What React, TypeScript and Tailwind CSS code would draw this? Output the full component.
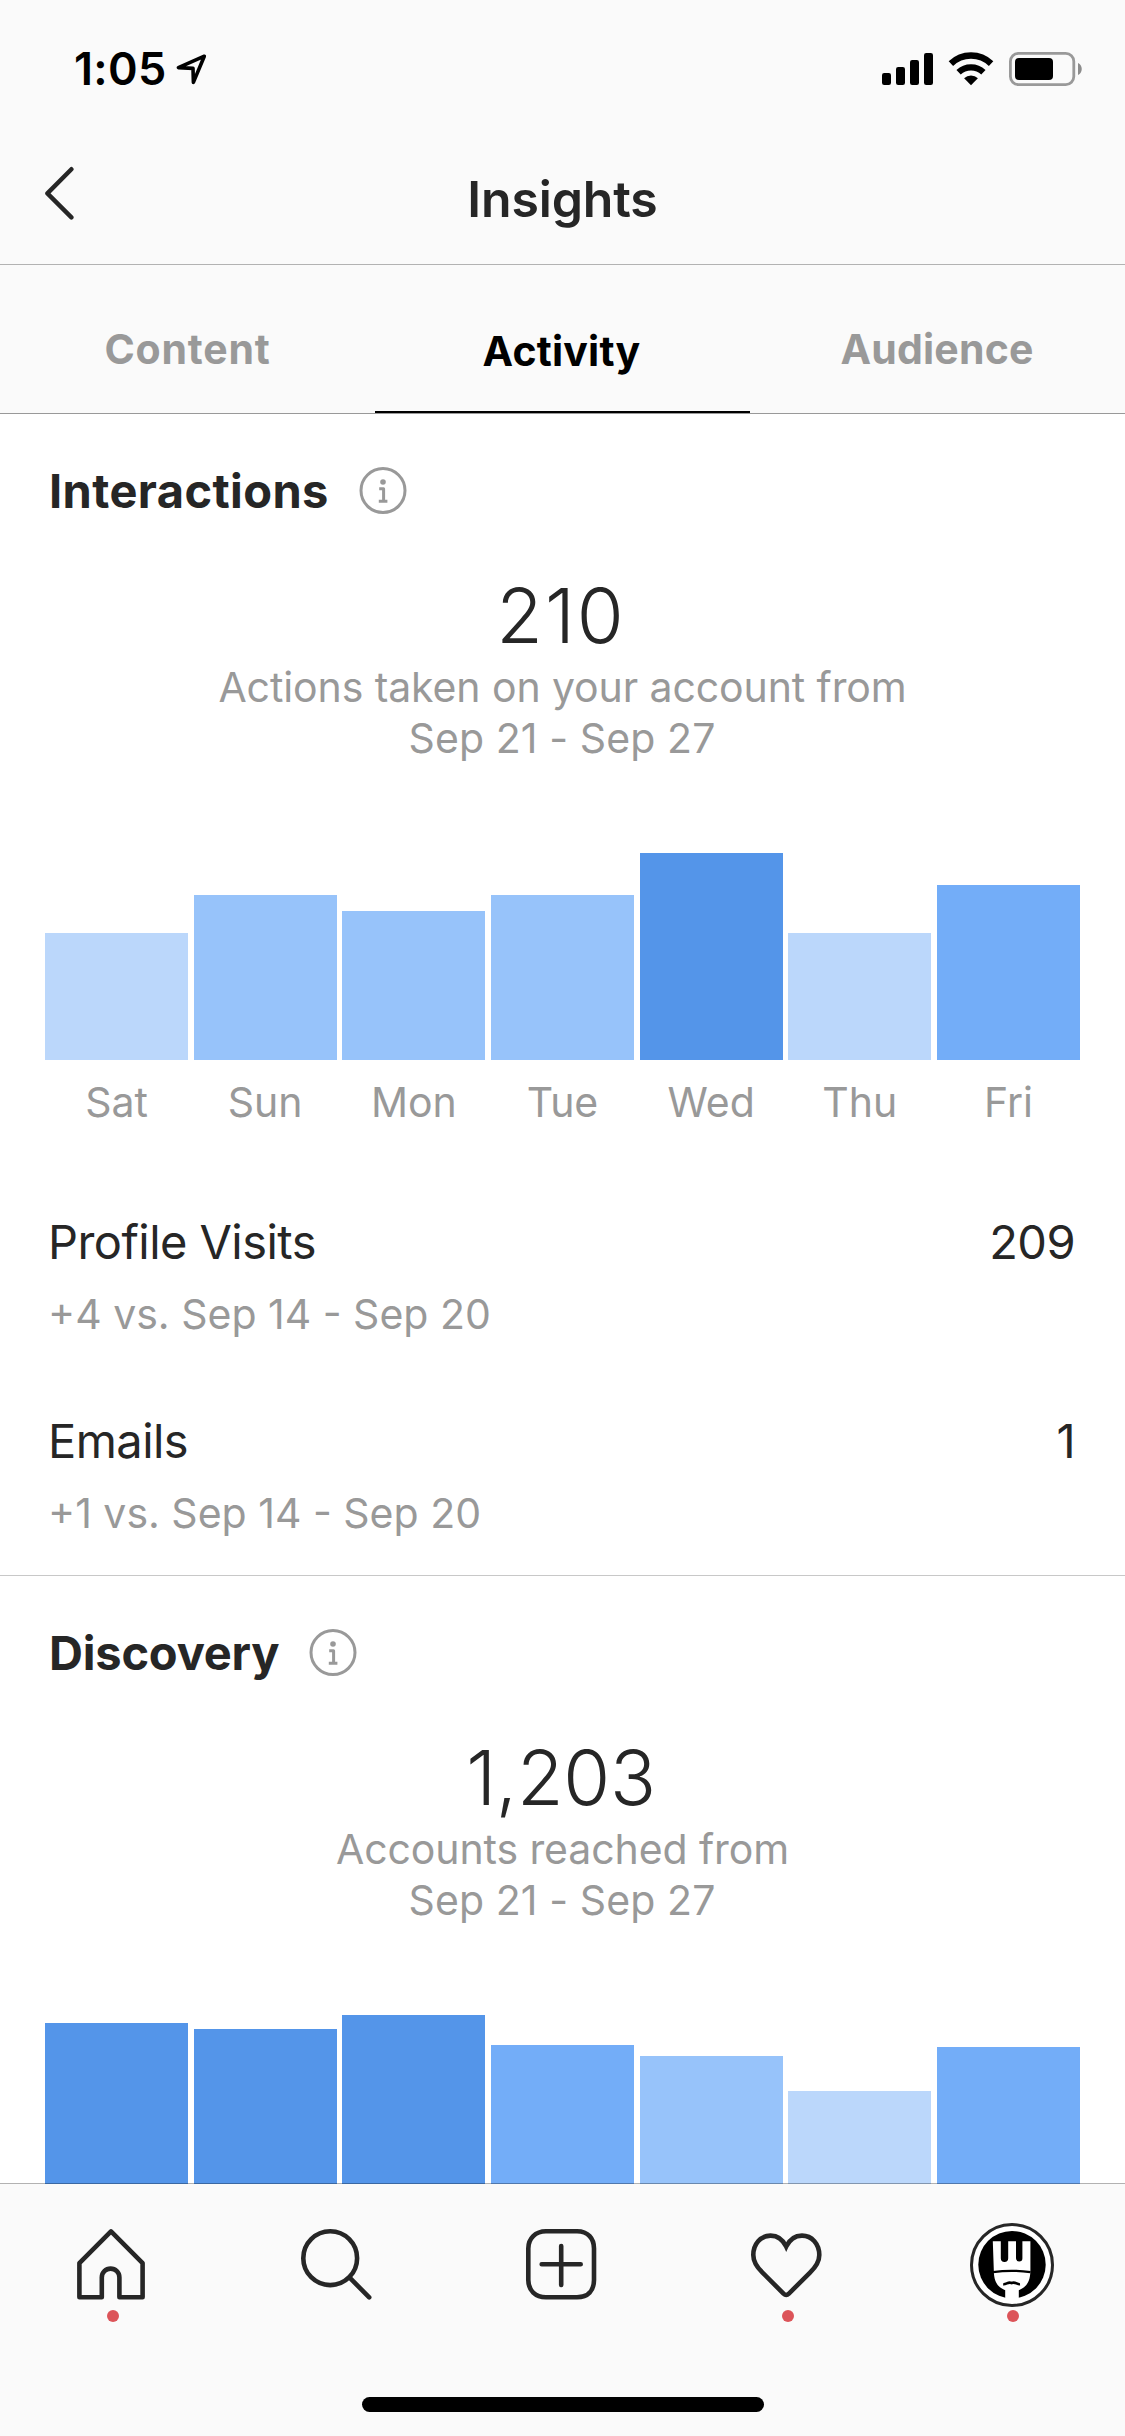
import React from 'react';

interface DayValue {
  day: string;
  value: number;
  color: string;
}

interface Metric {
  label: string;
  value: string;
  change: string;
}

interface SectionProps {
  title: string;
  titleClass: string;
  total: string;
  totalClass: string;
  caption: string;
  days: DayValue[];
  showDays?: boolean;
  metrics?: Metric[];
}

const CHART_HEIGHT = 207;

const interactions: DayValue[] = [
  { day: 'Sat', value: 24, color: 'bg-[#bbd7fb]' },
  { day: 'Sun', value: 31, color: 'bg-[#97c3fa]' },
  { day: 'Mon', value: 28, color: 'bg-[#97c3fa]' },
  { day: 'Tue', value: 31, color: 'bg-[#97c3fa]' },
  { day: 'Wed', value: 39, color: 'bg-[#5495e9]' },
  { day: 'Thu', value: 24, color: 'bg-[#bbd7fb]' },
  { day: 'Fri', value: 33, color: 'bg-[#73adf8]' },
];

const discovery: DayValue[] = [
  { day: 'Sat', value: 191, color: 'bg-[#5495e9]' },
  { day: 'Sun', value: 186, color: 'bg-[#5495e9]' },
  { day: 'Mon', value: 199, color: 'bg-[#5495e9]' },
  { day: 'Tue', value: 170, color: 'bg-[#73adf8]' },
  { day: 'Wed', value: 160, color: 'bg-[#97c3fa]' },
  { day: 'Thu', value: 126, color: 'bg-[#bbd7fb]' },
  { day: 'Fri', value: 168, color: 'bg-[#73adf8]' },
];

const metrics: Metric[] = [
  { label: 'Profile Visits', value: '209', change: '+4 vs. Sep 14 - Sep 20' },
  { label: 'Emails', value: '1', change: '+1 vs. Sep 14 - Sep 20' },
];

const StatusBar: React.FC = () => (
  <div className="flex h-[132px] items-start justify-between pt-[46px] pr-[42px] pl-[74px]">
    <div className="flex h-[46px] items-center gap-[9px]">
      <span className="text-[45px] leading-[46px] font-semibold tracking-[0.3px] text-black">1:05</span>
      <svg width="31" height="31" viewBox="0 0 31 31" fill="none" stroke="#000" strokeWidth="3.6" strokeLinejoin="round">
        <path d="M28.3 2.2 2.4 13.6 17 14.4 17.4 28.4Z" />
      </svg>
    </div>
    <div className="flex h-[46px] items-center">
      <svg width="52" height="34" viewBox="0 0 52 34" fill="#000">
        <rect x="0" y="21" width="9" height="12" rx="2.2" />
        <rect x="14" y="15" width="9" height="18" rx="2.2" />
        <rect x="28" y="8" width="9" height="25" rx="2.2" />
        <rect x="42" y="1" width="9" height="32" rx="2.2" />
      </svg>
      <svg className="ml-[14px]" width="46" height="34" viewBox="0 0 46 34">
        <path d="M2.9 11.6a29 29 0 0 1 40.2 0" fill="none" stroke="#000" strokeWidth="6.4" />
        <path d="M10.6 20.3a18 18 0 0 1 24.8 0" fill="none" stroke="#000" strokeWidth="6.2" />
        <path d="M16.1 26.3a10.2 10.2 0 0 1 13.8 0L23 33.2Z" fill="#000" />
      </svg>
      <svg className="ml-[15px]" width="74" height="34" viewBox="0 0 74 34">
        <rect x="1.4" y="1.4" width="63.4" height="31.2" rx="8" fill="none" stroke="#999" strokeWidth="2.8" />
        <rect x="6" y="6" width="38" height="22" rx="4" fill="#000" />
        <path d="M69 11c5 2 5 10 0 12Z" fill="#8c8c8c" />
      </svg>
    </div>
  </div>
);

const Header: React.FC = () => (
  <div className="grid h-[133px] grid-cols-3 items-center border-b border-[#b2b2b2] text-[#262626]">
    <svg className="mb-[10px] ml-[45px]" width="30" height="54" viewBox="0 0 30 54" fill="none" stroke="currentColor" strokeWidth="4.4" strokeLinecap="round" strokeLinejoin="round">
      <path d="M26.4 3.2 2.4 27.4 26.4 51.4" />
    </svg>
    <h1 className="pt-[2px] text-center text-[50px] leading-[60px] font-semibold tracking-[-0.15px]">Insights</h1>
  </div>
);

const Tabs: React.FC = () => (
  <div className="grid h-[149px] grid-cols-3 border-b border-[#999] text-center text-[41px] leading-[48px] font-bold tracking-[0.2px] text-[#999]">
    <div className="pt-[60px] tracking-[0.8px]">Content</div>
    <div className="border-b-2 border-black pt-[62px] pr-[2px] text-black">Activity</div>
    <div className="pt-[60px] pr-px">Audience</div>
  </div>
);

const InfoIcon: React.FC = () => (
  <svg width="48" height="48" viewBox="0 0 48 48" fill="none" stroke="#999" strokeWidth="3">
    <circle cx="24" cy="23.6" r="22" />
    <circle cx="24" cy="15" r="2.8" fill="#999" stroke="none" />
    <path d="M20.2 21.8H24.6V34.2M19.8 34.2H28.4" strokeWidth="3" strokeLinejoin="round" />
  </svg>
);

const BarChart: React.FC<{ days: DayValue[]; showDays: boolean }> = ({ days, showDays }) => {
  const max = Math.max(...days.map(d => d.value));

  return (
    <div className="px-[45px] pt-[89px]">
      <div className="grid h-[207px] grid-cols-7 items-end gap-x-[5.667px]">
        {days.map(d => (
          <div key={d.day} className={d.color} style={{ height: (d.value / max) * CHART_HEIGHT }} />
        ))}
      </div>
      {showDays && (
        <div className="mt-[17px] grid grid-cols-7 gap-x-[5.667px] text-center text-[41px] leading-[50px] text-[#999]">
          {days.map(d => (
            <span key={d.day}>{d.day}</span>
          ))}
        </div>
      )}
    </div>
  );
};

const Section: React.FC<SectionProps> = ({ title, titleClass, total, totalClass, caption, days, showDays = false, metrics = [] }) => (
  <section className="border-b border-[#c8c8c8] pb-[37px]">
    <div className="flex h-[154px] items-center gap-[30px] pl-[49px]">
      <h2 className={`text-[47px] leading-[56px] font-bold text-[#262626] ${titleClass}`}>{title}</h2>
      <InfoIcon />
    </div>
    <div className="text-center">
      <p className={`pt-px pr-[3px] text-[76px] leading-[93px] font-light text-[#262626] ${totalClass}`}>{total}</p>
      <p className="text-[41px] leading-[51px] tracking-[-0.1px] text-[#999]">{caption}</p>
      <p className="pr-px text-[41px] leading-[51px] tracking-[0.1px] text-[#999]">Sep 21 - Sep 27</p>
    </div>
    <BarChart days={days} showDays={showDays} />
    {metrics.length > 0 && (
      <div className="flex flex-col gap-[72px] pt-[85px] pr-[50px] pl-[48px]">
        {metrics.map(m => (
          <div key={m.label}>
            <div className="flex justify-between text-[47px] leading-[60px] tracking-[-0.55px] text-[#262626]">
              <span>{m.label}</span>
              <span>{m.value}</span>
            </div>
            <p className="mt-[17px] text-[41px] leading-[50px] text-[#999]">{m.change}</p>
          </div>
        ))}
      </div>
    )}
  </section>
);

const HomeIcon = () => (
  <svg width="84" height="84" viewBox="0 0 84 84" fill="none" stroke="#262626" strokeWidth="4.6" strokeLinejoin="round">
    <path d="M41 8.4 72.6 40.2V74.2H49.4V54.4a8.8 8.8 0 0 0-17.6 0V74.2H9.4V40.2Z" />
  </svg>
);

const SearchIcon = () => (
  <svg width="84" height="84" viewBox="0 0 84 84" fill="none" stroke="#262626" strokeWidth="4.6" strokeLinecap="round">
    <circle cx="35.2" cy="35.2" r="26.9" />
    <path d="M55.4 55.4 74.2 74.4" />
  </svg>
);

const AddIcon = () => (
  <svg width="84" height="84" viewBox="0 0 84 84" fill="none" stroke="#262626" strokeWidth="4.6" strokeLinecap="round">
    <path d="M26 8.3H57C68 8.3 74 15.5 74 25.5V57C74 67.5 68 74.2 57 74.2H26C15.5 74.2 8.3 67.5 8.3 57V25.5C8.3 15.5 15.5 8.3 26 8.3Z" />
    <path d="M41.2 23V62M21.7 41.2H60.7" />
  </svg>
);

const HeartIcon = () => (
  <svg width="84" height="84" viewBox="0 0 84 84" fill="none" stroke="#262626" strokeWidth="4.6">
    <path d="M41.2 23.6C38 16.8 32.5 12.6 25.5 12.6 15.5 12.6 8.3 21 8.3 32 8.3 39.5 12 44.3 17.5 49.6L38.5 70.6Q41.2 73.2 43.9 70.6L65 49.6C70.5 44.3 74.3 39.5 74.3 32 74.3 21 67 12.6 57 12.6 50 12.6 44.4 16.8 41.2 23.6Z" />
  </svg>
);

// Fork with a moustache inside a ring
const Avatar = () => (
  <svg width="84" height="84" viewBox="0 0 84 84">
    <circle cx="42" cy="42" r="40.5" fill="#fff" stroke="#262626" strokeWidth="3" />
    <circle cx="42" cy="41.7" r="33.7" fill="#000" />
    <path
      fill="#fff"
      d="M22.8 18.2H30.8V35.2a3.7 3.7 0 0 0 7.4 0V18.2H46V35.2a3.2 3.2 0 0 0 6.4 0V18.2H60.4V47C60.4 58 57 64 48.8 67.2V77H35.2V67.2C27 64 23.8 58 23.8 47Z"
    />
    <path d="M23 49.2Q41.5 46.4 60.5 49.2" fill="none" stroke="#000" strokeWidth="2.2" />
    <path d="M33.2 61.2C36.5 61.6 38 58.4 41.6 60 45.3 58.4 47 61.6 50 61.2" fill="none" stroke="#000" strokeWidth="2.6" />
  </svg>
);

const navItems = [
  { name: 'home', icon: <HomeIcon />, hasDot: true },
  { name: 'search', icon: <SearchIcon />, hasDot: false },
  { name: 'add', icon: <AddIcon />, hasDot: false },
  { name: 'activity', icon: <HeartIcon />, hasDot: true },
  { name: 'profile', icon: <Avatar />, hasDot: true },
];

const BottomNav: React.FC = () => (
  <nav className="relative flex h-[252px] shrink-0 flex-col items-center bg-[#fafafa]">
    <div className="absolute inset-x-0 -top-px h-px bg-black/30" />
    <div className="grid h-[213px] w-full grid-cols-5 pt-[39px]">
      {navItems.map(item => (
        <div key={item.name} className="flex flex-col items-center gap-[3px]">
          <div className="mr-[2px]">{item.icon}</div>
          {item.hasDot && <span className="ml-px size-3 rounded-full bg-[#dc5459]" />}
        </div>
      ))}
    </div>
    <div className="h-[15px] w-[402px] rounded-full bg-black" />
  </nav>
);

const App: React.FC = () => (
  <div className="flex h-[2436px] w-[1125px] flex-col overflow-hidden bg-white font-['Inter',sans-serif]">
    <header className="shrink-0 bg-[#fafafa]">
      <StatusBar />
      <Header />
      <Tabs />
    </header>
    <main className="min-h-0 flex-1 overflow-hidden">
      <Section
        title="Interactions"
        titleClass="tracking-[0.4px]"
        total="210"
        totalClass="tracking-[2px]"
        caption="Actions taken on your account from"
        days={interactions}
        showDays
        metrics={metrics}
      />
      <Section
        title="Discovery"
        titleClass="tracking-[-0.2px]"
        total="1,203"
        totalClass="tracking-[-0.3px]"
        caption="Accounts reached from"
        days={discovery}
      />
    </main>
    <BottomNav />
  </div>
);

export default App;
